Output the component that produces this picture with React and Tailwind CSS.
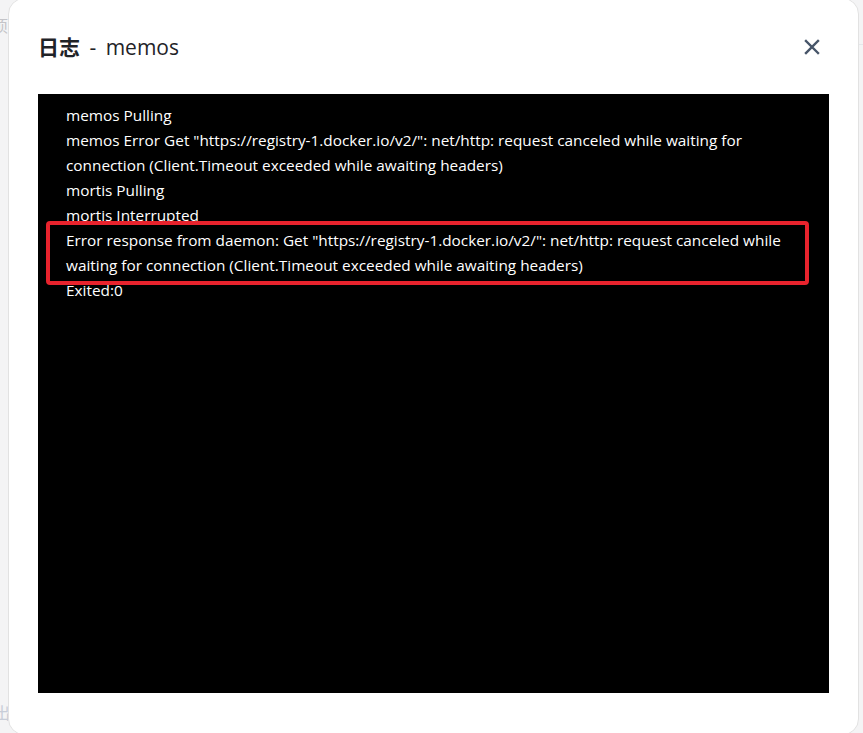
import React from 'react';

// 日志弹窗：显示容器拉取日志
const logLines = [
    'memos Pulling',
    'memos Error Get "https://registry-1.docker.io/v2/": net/http: request canceled while waiting for connection (Client.Timeout exceeded while awaiting headers)',
    'mortis Pulling',
    'mortis Interrupted',
    'Error response from daemon: Get "https://registry-1.docker.io/v2/": net/http: request canceled while waiting for connection (Client.Timeout exceeded while awaiting headers)',
    'Exited:0',
];

function CloseIcon() {
    return (
        <svg width="16" height="16" viewBox="0 0 16 16" fill="none">
            <path d="M2 2L14 14M14 2L2 14" stroke="#475569" strokeWidth="2.4" strokeLinecap="square" />
        </svg>
    );
}

export default function App() {
    return (
        <div
            className="relative w-[863px] h-[733px] overflow-hidden bg-[#f4f4f5]"
            style={{ fontFamily: '"Open Sans", "Noto Sans CJK SC", sans-serif' }}
        >
            {/* 背景页面 */}
            <div className="pt-[14px] text-[16px] text-[#c4c4c8]">
                <div className="-ml-[8px]">项目</div>
            </div>
            <div className="absolute left-0 bottom-[8px] -ml-[6px] text-[16px] text-[#c8cdd8]">出</div>
            <div className="absolute right-0 top-[44px] w-[10px] border-t border-[#e5e7eb]"></div>

            {/* 弹窗 */}
            <div className="absolute left-[8px] right-[4px] -top-[2px] h-[737px] bg-white rounded-[16px] border border-[#e2e2e2] px-[29px] flex flex-col">
                <div className="h-[95px] flex items-center justify-between">
                    <h2 className="text-[21px] font-medium text-[#1f2328] leading-none [word-spacing:4px]">
                        <span className="font-bold" style={{ fontFamily: '"Noto Sans CJK SC", sans-serif' }}>日志</span> - memos
                    </h2>
                    <button className="mr-[9px] mt-[1px]">
                        <CloseIcon />
                    </button>
                </div>

                <div className="relative h-[599px] bg-black pl-[28px] pr-[26px] pt-[9px] text-white text-[15.35px] leading-[25px]">
                    {logLines.map((line, i) => (
                        <div key={i}>{line}</div>
                    ))}
                    {/* 标注框 */}
                    <div className="absolute left-[8px] top-[127px] w-[763px] h-[64px] border-[4px] border-[#e8232d] rounded-[4px]"></div>
                </div>
            </div>
        </div>
    );
}
